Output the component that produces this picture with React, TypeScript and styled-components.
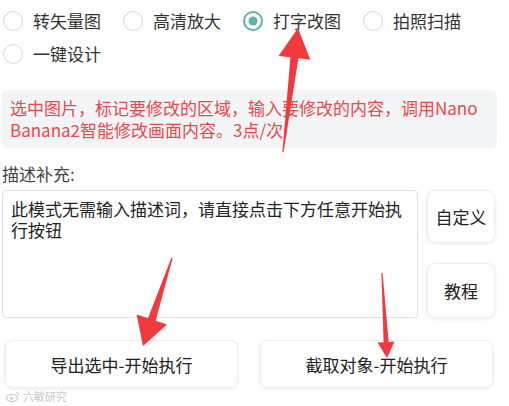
import React from "react";
import styled, { createGlobalStyle } from "styled-components";

const GlobalStyle = createGlobalStyle`
  body {
    margin: 0;
    background: #fff;
    font-family: "Noto Sans CJK SC", "Noto Sans", sans-serif;
    color: #333;
  }
`;

type Pt = [number, number];

// tapered annotation arrow: thin tail, wide triangular head
const arrowPoints = (
  tail: Pt,
  tip: Pt,
  headLen: number,
  headW: number,
  shaftW: number
) => {
  const dx = tip[0] - tail[0];
  const dy = tip[1] - tail[1];
  const len = Math.hypot(dx, dy);
  const ux = dx / len;
  const uy = dy / len;
  const nx = -uy;
  const ny = ux;
  const bx = tip[0] - ux * headLen;
  const by = tip[1] - uy * headLen;
  const pts: Pt[] = [
    [tail[0] + nx * 0.6, tail[1] + ny * 0.6],
    [bx + nx * shaftW * 0.5, by + ny * shaftW * 0.5],
    [bx + nx * headW * 0.5, by + ny * headW * 0.5],
    tip,
    [bx - nx * headW * 0.5, by - ny * headW * 0.5],
    [bx - nx * shaftW * 0.5, by - ny * shaftW * 0.5],
    [tail[0] - nx * 0.6, tail[1] - ny * 0.6],
  ];
  return pts.map((p) => `${p[0].toFixed(1)},${p[1].toFixed(1)}`).join(" ");
};

const modes = ["转矢量图", "高清放大", "打字改图", "拍照扫描", "一键设计"];

export default function App() {
  const selected = "打字改图";
  return (
    <>
      <GlobalStyle />
      <Page>
        <RadioGroup>
          {modes.map((m) => (
            <RadioItem key={m}>
              <RadioCircle $checked={m === selected} />
              <RadioLabel>{m}</RadioLabel>
            </RadioItem>
          ))}
        </RadioGroup>

        <InfoBox>
          选中图片，标记要修改的区域，输入要修改的内容，调用Nano
          Banana2智能修改画面内容。3点/次
        </InfoBox>

        <FieldLabel>描述补充:</FieldLabel>

        <EditorRow>
          <Prompt
            readOnly
            defaultValue="此模式无需输入描述词，请直接点击下方任意开始执行按钮"
          />
          <SideColumn>
            <SideButton $height={53}>自定义</SideButton>
            <SideButton $height={55}>教程</SideButton>
          </SideColumn>
        </EditorRow>

        <ActionRow>
          <ActionButton>导出选中-开始执行</ActionButton>
          <ActionButton>截取对象-开始执行</ActionButton>
        </ActionRow>

        <Watermark>
          <svg width="14" height="11" viewBox="0 0 14 11">
            <ellipse cx="6" cy="7" rx="5.5" ry="3.5" fill="none" stroke="#c8c8c8" strokeWidth="1.2" />
            <circle cx="5.5" cy="7.3" r="1.4" fill="#c8c8c8" />
            <path d="M10 1.5 a3 3 0 0 1 3 3" fill="none" stroke="#c8c8c8" strokeWidth="1" />
          </svg>
          <span>六敏研究</span>
        </Watermark>

        <Annotations viewBox="0 0 509 406">
          <polygon fill="#f2393c" points={arrowPoints([283, 152], [298, 28], 30, 32, 8)} />
          <polygon fill="#f2393c" points={arrowPoints([172, 258], [143, 346], 28, 32, 8)} />
          <polygon fill="#f2393c" points={arrowPoints([382, 273], [387, 358], 16, 17, 5)} />
        </Annotations>
      </Page>
    </>
  );
}

const Page = styled.div`
  position: relative;
  width: 509px;
  height: 406px;
  box-sizing: border-box;
  padding: 9px 12px 0 2px;
  display: flex;
  flex-direction: column;
  overflow: hidden;
`;

const RadioGroup = styled.div`
  display: flex;
  flex-wrap: wrap;
  column-gap: 22px;
  row-gap: 9px;
  padding-left: 1px;
`;

const RadioItem = styled.label`
  display: flex;
  align-items: center;
  gap: 10px;
  height: 24px;
  cursor: pointer;
`;

const RadioCircle = styled.span<{ $checked: boolean }>`
  position: relative;
  width: 20px;
  height: 20px;
  box-sizing: border-box;
  border-radius: 50%;
  border: ${(p) => (p.$checked ? "2.5px solid #5db3a2" : "1.5px solid #d3d6db")};
  background: #fff;

  &::after {
    content: "";
    display: ${(p) => (p.$checked ? "block" : "none")};
    position: absolute;
    left: 50%;
    top: 50%;
    width: 9px;
    height: 9px;
    border-radius: 50%;
    background: #5db3a2;
    transform: translate(-50%, -50%);
  }
`;

const RadioLabel = styled.span`
  font-size: 17px;
  line-height: 24px;
  color: #333;
`;

const InfoBox = styled.div`
  margin-top: 24px;
  padding: 7px 8px;
  background: #f3f4f6;
  border-radius: 6px;
  color: #e54b4e;
  font-size: 17px;
  line-height: 22px;
`;

const FieldLabel = styled.div`
  margin-top: 15px;
  font-size: 17px;
  line-height: 22px;
  color: #444;
`;

const EditorRow = styled.div`
  margin-top: 5px;
  display: flex;
  gap: 9px;
  height: 128px;
`;

const Prompt = styled.textarea`
  width: 416px;
  height: 128px;
  box-sizing: border-box;
  margin: 0;
  padding: 7px 8px 6px 8px;
  border: 1px solid #dcdfe4;
  border-radius: 4px;
  resize: none;
  outline: none;
  font-family: "Noto Sans CJK SC", "Noto Sans", sans-serif;
  font-size: 17px;
  line-height: 21px;
  color: #222;
  background: #fff;
`;

const SideColumn = styled.div`
  display: flex;
  flex-direction: column;
  justify-content: space-between;
  width: 68px;
`;

const SideButton = styled.button<{ $height: number }>`
  height: ${(p) => p.$height}px;
  width: 68px;
  padding: 0;
  border: 1px solid #eceef1;
  border-radius: 8px;
  background: #fff;
  box-shadow: 0 1px 4px rgba(0, 0, 0, 0.08);
  font-family: "Noto Sans CJK SC", "Noto Sans", sans-serif;
  font-size: 17px;
  color: #222;
`;

const ActionRow = styled.div`
  margin-top: 22px;
  display: flex;
  gap: 22px;
  padding-left: 3px;
`;

const ActionButton = styled.button`
  width: 233px;
  height: 48px;
  padding: 0;
  border: 1px solid #eceef1;
  border-radius: 8px;
  background: #fff;
  box-shadow: 0 1px 4px rgba(0, 0, 0, 0.08);
  font-family: "Noto Sans CJK SC", "Noto Sans", sans-serif;
  font-size: 17px;
  color: #222;
`;

const Watermark = styled.div`
  margin-top: 2px;
  padding-left: 4px;
  display: flex;
  align-items: center;
  gap: 3px;
  font-size: 11px;
  line-height: 12px;
  color: #c8c8c8;
`;

const Annotations = styled.svg`
  position: absolute;
  left: 0;
  top: 0;
  width: 509px;
  height: 406px;
  pointer-events: none;
`;
